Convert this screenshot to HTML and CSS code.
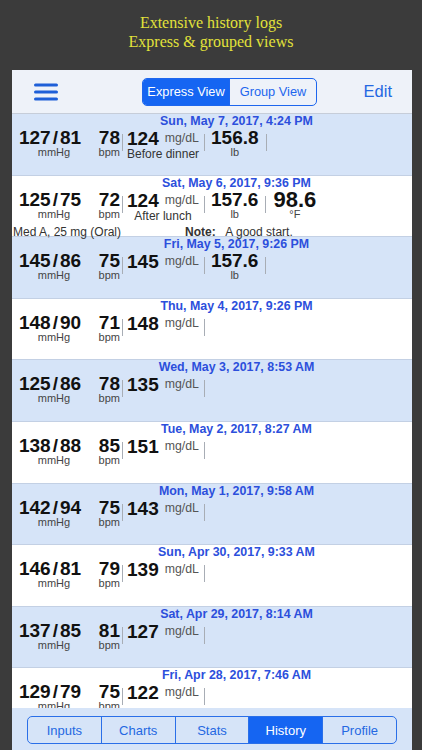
FILE: index.html
```html
<!DOCTYPE html>
<html lang="en">
<head>
    <meta charset="UTF-8">
    <meta name="viewport" content="width=device-width, initial-scale=1.0">
    <title>History</title>
    <link rel="stylesheet" href="styles.css">
</head>
<body>
    <div class="caption">
        Extensive history logs<br>
        Express &amp; grouped views
    </div>

    <div class="phone-card">
        <div class="top-bar">
            <svg class="menu-icon" width="24" height="18" viewBox="0 0 24 18">
                <path d="M1.5 2h21M1.5 9h21M1.5 16h21" stroke="#1e5fd8" stroke-width="3" stroke-linecap="round"/>
            </svg>
            <div class="view-switch">
                <span class="seg active">Express View</span>
                <span class="seg">Group View</span>
            </div>
            <span class="edit-btn">Edit</span>
        </div>

        <div class="history-list">
            <div class="entry shaded">
                <div class="entry-date">Sun, May 7, 2017, 4:24 PM</div>
                <div class="readings">
                    <div class="slot bp"><div class="num">127<i>/</i>81</div><div class="unit">mmHg</div></div>
                    <div class="slot pulse"><div class="num">78</div><div class="unit">bpm</div></div>
                    <span class="sep"></span>
                    <div class="slot sugar"><div class="num">124<small>mg/dL</small></div><div class="comment">Before dinner</div></div>
                    <span class="sep"></span>
                    <div class="slot weight"><div class="num">156.8</div><div class="unit">lb</div></div>
                    <span class="sep"></span>
                </div>
            </div>

            <div class="entry">
                <div class="entry-date">Sat, May 6, 2017, 9:36 PM</div>
                <div class="readings">
                    <div class="slot bp"><div class="num">125<i>/</i>75</div><div class="unit">mmHg</div></div>
                    <div class="slot pulse"><div class="num">72</div><div class="unit">bpm</div></div>
                    <span class="sep"></span>
                    <div class="slot sugar"><div class="num">124<small>mg/dL</small></div><div class="comment">After lunch</div></div>
                    <span class="sep"></span>
                    <div class="slot weight"><div class="num">157.6</div><div class="unit">lb</div></div>
                    <span class="sep"></span>
                    <div class="slot temp"><div class="num">98.6</div><div class="unit">°F</div></div>
                </div>
                <div class="extra">
                    <span class="med">Med A, 25 mg (Oral)</span>
                    <span class="note"><b>Note:</b> A good start.</span>
                </div>
            </div>

            <div class="entry shaded">
                <div class="entry-date">Fri, May 5, 2017, 9:26 PM</div>
                <div class="readings">
                    <div class="slot bp"><div class="num">145<i>/</i>86</div><div class="unit">mmHg</div></div>
                    <div class="slot pulse"><div class="num">75</div><div class="unit">bpm</div></div>
                    <span class="sep"></span>
                    <div class="slot sugar"><div class="num">145<small>mg/dL</small></div></div>
                    <span class="sep"></span>
                    <div class="slot weight"><div class="num">157.6</div><div class="unit">lb</div></div>
                    <span class="sep"></span>
                </div>
            </div>

            <div class="entry">
                <div class="entry-date">Thu, May 4, 2017, 9:26 PM</div>
                <div class="readings">
                    <div class="slot bp"><div class="num">148<i>/</i>90</div><div class="unit">mmHg</div></div>
                    <div class="slot pulse"><div class="num">71</div><div class="unit">bpm</div></div>
                    <span class="sep"></span>
                    <div class="slot sugar"><div class="num">148<small>mg/dL</small></div></div>
                    <span class="sep"></span>
                </div>
            </div>

            <div class="entry shaded">
                <div class="entry-date">Wed, May 3, 2017, 8:53 AM</div>
                <div class="readings">
                    <div class="slot bp"><div class="num">125<i>/</i>86</div><div class="unit">mmHg</div></div>
                    <div class="slot pulse"><div class="num">78</div><div class="unit">bpm</div></div>
                    <span class="sep"></span>
                    <div class="slot sugar"><div class="num">135<small>mg/dL</small></div></div>
                    <span class="sep"></span>
                </div>
            </div>

            <div class="entry">
                <div class="entry-date">Tue, May 2, 2017, 8:27 AM</div>
                <div class="readings">
                    <div class="slot bp"><div class="num">138<i>/</i>88</div><div class="unit">mmHg</div></div>
                    <div class="slot pulse"><div class="num">85</div><div class="unit">bpm</div></div>
                    <span class="sep"></span>
                    <div class="slot sugar"><div class="num">151<small>mg/dL</small></div></div>
                    <span class="sep"></span>
                </div>
            </div>

            <div class="entry shaded">
                <div class="entry-date">Mon, May 1, 2017, 9:58 AM</div>
                <div class="readings">
                    <div class="slot bp"><div class="num">142<i>/</i>94</div><div class="unit">mmHg</div></div>
                    <div class="slot pulse"><div class="num">75</div><div class="unit">bpm</div></div>
                    <span class="sep"></span>
                    <div class="slot sugar"><div class="num">143<small>mg/dL</small></div></div>
                    <span class="sep"></span>
                </div>
            </div>

            <div class="entry">
                <div class="entry-date">Sun, Apr 30, 2017, 9:33 AM</div>
                <div class="readings">
                    <div class="slot bp"><div class="num">146<i>/</i>81</div><div class="unit">mmHg</div></div>
                    <div class="slot pulse"><div class="num">79</div><div class="unit">bpm</div></div>
                    <span class="sep"></span>
                    <div class="slot sugar"><div class="num">139<small>mg/dL</small></div></div>
                    <span class="sep"></span>
                </div>
            </div>

            <div class="entry shaded">
                <div class="entry-date">Sat, Apr 29, 2017, 8:14 AM</div>
                <div class="readings">
                    <div class="slot bp"><div class="num">137<i>/</i>85</div><div class="unit">mmHg</div></div>
                    <div class="slot pulse"><div class="num">81</div><div class="unit">bpm</div></div>
                    <span class="sep"></span>
                    <div class="slot sugar"><div class="num">127<small>mg/dL</small></div></div>
                    <span class="sep"></span>
                </div>
            </div>

            <div class="entry">
                <div class="entry-date">Fri, Apr 28, 2017, 7:46 AM</div>
                <div class="readings">
                    <div class="slot bp"><div class="num">129<i>/</i>79</div><div class="unit">mmHg</div></div>
                    <div class="slot pulse"><div class="num">75</div><div class="unit">bpm</div></div>
                    <span class="sep"></span>
                    <div class="slot sugar"><div class="num">122<small>mg/dL</small></div></div>
                    <span class="sep"></span>
                </div>
            </div>
        </div>

        <div class="tab-bar">
            <div class="tabs">
                <span class="tab">Inputs</span>
                <span class="tab">Charts</span>
                <span class="tab">Stats</span>
                <span class="tab active">History</span>
                <span class="tab">Profile</span>
            </div>
        </div>
    </div>
</body>
</html>
```

FILE: styles.css
```css
body {
    margin: 0;
    height: 750px;
    overflow: hidden;
    background: #3b3b3b;
    font-family: 'Liberation Sans', Arial, sans-serif;
}

.caption {
    padding-top: 13px;
    height: 70px;
    box-sizing: border-box;
    text-align: center;
    font-family: 'Liberation Serif', 'Times New Roman', serif;
    font-size: 16px;
    line-height: 19px;
    color: #e2e23a;
}

.phone-card {
    margin-left: 12px;
    width: 400px;
    height: 680px;
    background: #fff;
    display: flex;
    flex-direction: column;
    overflow: hidden;
}

/* top bar */
.top-bar {
    height: 44px;
    box-sizing: border-box;
    flex-shrink: 0;
    display: flex;
    align-items: center;
    padding: 0 20px 0 22px;
    background: #eef2f9;
    border-bottom: 1px solid #c6cdd9;
}

.menu-icon {
    display: block;
}

.view-switch {
    display: flex;
    margin-left: 84px;
    width: 175px;
    height: 28px;
    box-sizing: border-box;
    border: 1px solid #1d66ee;
    border-radius: 5px;
    overflow: hidden;
}

.seg {
    flex: 1;
    display: flex;
    align-items: center;
    justify-content: center;
    font-size: 12.8px;
    color: #1d66ee;
}

.seg + .seg {
    border-left: 1px solid #1d66ee;
}

.seg.active {
    background: #1565f2;
    color: #fff;
}

.edit-btn {
    margin-left: auto;
    font-size: 16.5px;
    color: #2468e2;
}

/* history rows */
.history-list {
    flex: 1;
    overflow: hidden;
}

.entry {
    height: 61.6px;
    box-sizing: border-box;
    padding-left: 1px;
    border-bottom: 1px solid #c3d0e4;
    background: #fff;
}

.entry.shaded {
    background: #d6e4f8;
}

.entry-date {
    padding-left: 48px;
    text-align: center;
    font-size: 12.4px;
    font-weight: bold;
    line-height: 15px;
    color: #2c4fdc;
}

.readings {
    display: flex;
    align-items: flex-start;
    margin-top: 1px;
    padding-left: 3px;
}

.slot {
    color: #111;
}

.num {
    font-size: 19px;
    font-weight: bold;
    line-height: 16px;
    white-space: nowrap;
}

.num i {
    font-style: normal;
    padding: 0 2px;
}

.num small {
    margin-left: 6px;
    font-size: 12.3px;
    font-weight: normal;
    color: #555;
    vertical-align: 3px;
}

.unit {
    font-size: 11px;
    line-height: 12px;
    color: #444;
}

.comment {
    font-size: 12px;
    line-height: 14px;
    color: #333;
    text-align: center;
}

.bp {
    width: 68px;
    text-align: center;
}

.bp .unit {
    padding-left: 8px;
}

.pulse {
    width: 36px;
    text-align: right;
}

.sep {
    width: 1px;
    height: 17px;
    margin: 4px 0 0 2px;
    background: #a8adb5;
}

.sugar {
    padding: 0 3px 0 4px;
}

.weight {
    padding: 0 5px 0 6px;
    text-align: center;
}

.temp {
    padding-left: 7px;
    text-align: center;
}

.temp .num {
    font-size: 22px;
}

.extra {
    display: flex;
    margin-top: 2px;
    font-size: 12px;
    line-height: 14px;
    color: #333;
}

.med {
    width: 172px;
}

.note b {
    margin-right: 7px;
}

/* bottom tabs */
.tab-bar {
    height: 42px;
    box-sizing: border-box;
    flex-shrink: 0;
    padding: 8px 15px 0 15px;
    background: #d6e4f8;
}

.tabs {
    display: flex;
    height: 28px;
    box-sizing: border-box;
    border: 1px solid #2a6fe8;
    border-radius: 5px;
    overflow: hidden;
}

.tab {
    flex: 1;
    display: flex;
    align-items: center;
    justify-content: center;
    font-size: 13px;
    color: #2468e2;
}

.tab + .tab {
    border-left: 1px solid #2a6fe8;
}

.tab.active {
    background: #1565f2;
    color: #fff;
}
```
